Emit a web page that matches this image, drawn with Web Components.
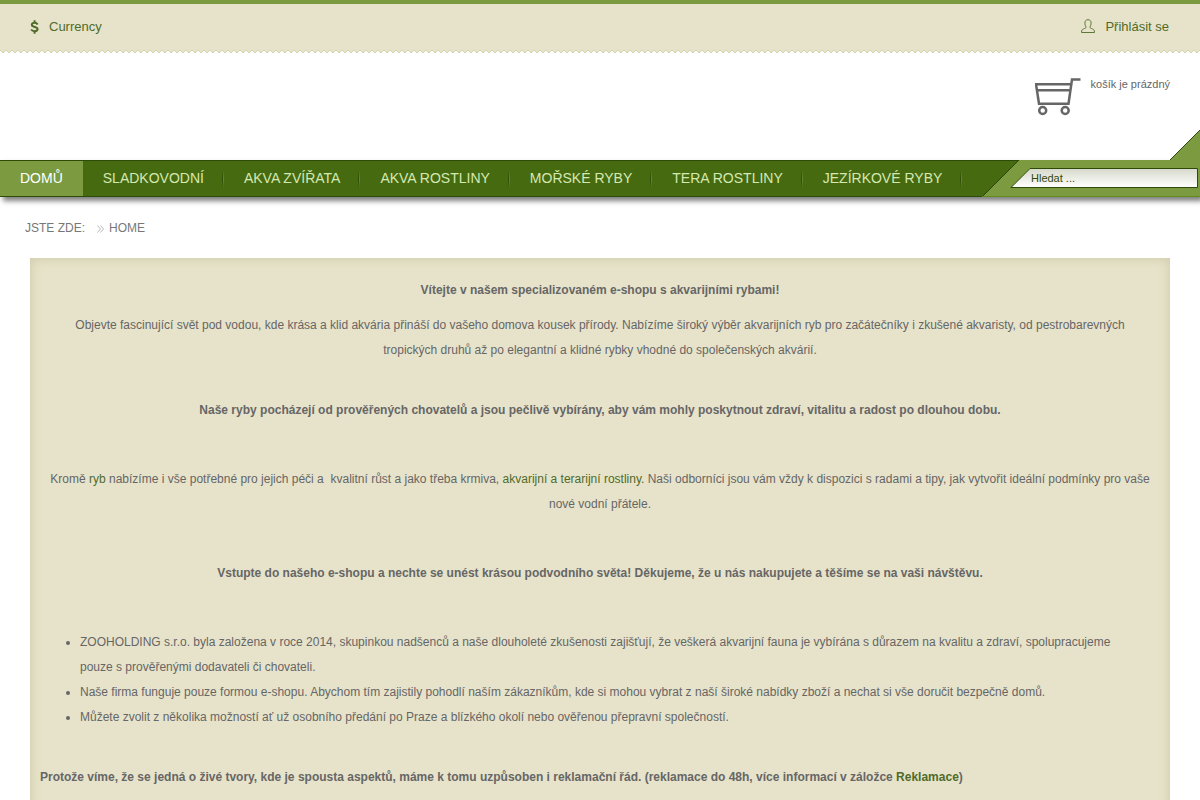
<!DOCTYPE html>
<html lang="cs">
<head>
<meta charset="utf-8">
<title>Akvarijní ryby</title>
<style>
html{overflow-x:hidden;scrollbar-width:none}
body{margin:0;background:#fff;color:#666;font:12px/25px "Liberation Sans",Arial,sans-serif}
a{color:#4f6b29;text-decoration:none}
</style>
</head>
<body>
<shop-page>
  <top-bar></top-bar>
  <shop-cart></shop-cart>
  <main-nav><site-search></site-search></main-nav>
  <bread-crumbs></bread-crumbs>
  <content-panel>
    <text-block>
      <strong>Vítejte v našem specializovaném e-shopu s akvarijními rybami!</strong>
    </text-block>
    <text-block space="small">Objevte fascinující svět pod vodou, kde krása a klid akvária přináší do vašeho domova kousek přírody. Nabízíme široký výběr akvarijních ryb pro začátečníky i zkušené akvaristy, od pestrobarevných tropických druhů až po elegantní a klidné rybky vhodné do společenských akvárií.</text-block>
    <text-block space="medium"><strong>Naše ryby pocházejí od prověřených chovatelů a jsou pečlivě vybírány, aby vám mohly poskytnout zdraví, vitalitu a radost po dlouhou dobu.</strong></text-block>
    <text-block space="large">Kromě <a href="#ryby">ryb</a> nabízíme i vše potřebné pro jejich péči a&nbsp; kvalitní růst a jako třeba krmiva, <a href="#rostliny">akvarijní a terarijní rostliny.</a> Naši odborníci jsou vám vždy k dispozici s radami a tipy, jak vytvořit ideální podmínky pro vaše nové vodní přátele.</text-block>
    <text-block space="large"><strong>Vstupte do našeho e-shopu a nechte se unést krásou podvodního světa! Děkujeme, že u nás nakupujete a těšíme se na vaši návštěvu.</strong></text-block>
    <about-list></about-list>
    <text-block space="medium" align="left"><strong>Protože víme, že se jedná o živé tvory, kde je spousta aspektů, máme k tomu uzpůsoben i reklamační řád. (reklamace do 48h, více informací v záložce <a href="#reklamace">Reklamace</a>)</strong></text-block>
  </content-panel>
</shop-page>
<script>
function define(name, html) {
  const template = document.createElement('template');
  template.innerHTML = html;
  customElements.define(name, class extends HTMLElement {
    constructor() {
      super();
      this.attachShadow({mode: 'open'}).append(template.content.cloneNode(true));
    }
  });
}

define('shop-page', `<style>:host{display:block}</style><slot></slot>`);

define('top-bar', `
<style>
:host{display:block;background:#e7e3ca;border-top:4px solid #7c9b40}
.row{display:flex;justify-content:space-between;align-items:center;height:45px;padding:0 31px 1px 30px}
a,button{display:flex;align-items:center;gap:10px;padding:0;border:0;background:none;color:#4f6b29;font:13px/20px "Liberation Sans",Arial,sans-serif;text-decoration:none}
svg{display:block}
.edge{height:4px;width:100%}
</style>
<div class="row">
  <button type="button"><svg width="9" height="14" viewBox="0 0 9 14" fill="none" stroke="#4f6b29" stroke-width="2"><path d="M7.6 4.400C7 3.300 6 2.700 4.600 2.700 2.900 2.700 1.800 3.500 1.800 4.800c0 2.900 5.800 1.300 5.800 4.300 0 1.300-1.200 2.100-2.900 2.100-1.500 0-2.800-.6-3.600-1.700M4.600.3V3M4.600 11v2.700"/></svg>Currency</button>
  <a href="#login"><svg width="14" height="16" viewBox="0 0 14 16" fill="none" stroke="#5c7836"><path d="M5.2 8.100C4.300 7.200 3.900 5.700 3.900 4.100 3.900 2 5.100.7 7 .7s3.100 1.300 3.100 3.400c0 1.600-.4 3.100-1.300 4 .2 1 1.300 1.300 2.700 1.800 1.300.5 2 1.300 2 3.600H.500c0-2.300.7-3.100 2-3.600 1.400-.5 2.500-.8 2.700-1.800z"/></svg>Přihlásit se</a>
</div>
<svg class="edge" aria-hidden="true"><defs><pattern id="z" width="6" height="4" patternUnits="userSpaceOnUse"><path d="M0 1 3 4 6 1V5H0z" transform="matrix(1 0 0 -1 0 5)" fill="none"/><path d="M0 0 3 3 6 0V5H0z" fill="#fff"/><path d="M0 0 3 3 6 0" fill="none" stroke="#d3d3ae"/></pattern></defs><rect width="100%" height="4" fill="url(#z)"/></svg>`);

define('shop-cart', `
<style>
:host{display:flex;justify-content:flex-end;gap:10px;height:83px;padding:23px 30px 0;font-size:11px;line-height:14px}
svg{display:block}
</style>
<svg width="46" height="39" viewBox="0 0 46 39" fill="none" stroke="#666" stroke-width="2.500"><path d="M45.500 2.500H37L33.500 26.800H4L1 7.300H36M2 13.300H35.500"/><circle cx="7.700" cy="33.500" r="3.500"/><circle cx="30.200" cy="33.500" r="3.500"/></svg>
<span>košík je prázdný</span>`);

define('main-nav', `
<style>
:host{display:flex;justify-content:space-between;position:relative;height:35px;background:#466a10;border-top:1px solid #2e4a08;border-bottom:1px solid #2e4a08;box-shadow:3px 4px 5px rgba(0,0,0,.5)}
nav{display:flex}
a{display:block;padding:0 20px;font-size:14px;line-height:34px;color:#d5e8b0;text-decoration:none;background:linear-gradient(#466a10,#2e4a08,#466a10) right 1px center/1px 18px no-repeat,linear-gradient(#466a10,#668739,#466a10) right center/1px 18px no-repeat;white-space:nowrap}
a.on{background:#7c9b40;color:#fff}
</style>
<nav><a class="on" href="#domu">DOMŮ</a><a href="#sladkovodni">SLADKOVODNÍ</a><a href="#zvirata">AKVA ZVÍŘATA</a><a href="#rostliny">AKVA ROSTLINY</a><a href="#morske">MOŘSKÉ RYBY</a><a href="#tera">TERA ROSTLINY</a><a href="#jezirkove">JEZÍRKOVÉ RYBY</a></nav>
<slot></slot>`);

define('site-search', `
<style>
:host{display:block;position:relative;width:217px;flex:none}
svg{position:absolute;right:0;bottom:-1px;display:block}
label{display:block;position:relative;margin:7px 2px 0 28px}
input{display:block;box-sizing:border-box;width:100%;height:20px;padding:0 4px 0 20px;border:0;background:none;outline:0;color:#2e4a08;font:11px/20px "Liberation Sans",Arial,sans-serif}
input::placeholder{color:#2e4a08;opacity:1}
</style>
<svg width="218" height="68" viewBox="0 0 218 68" aria-hidden="true">
<defs><linearGradient id="f" x2="0" y2="1"><stop stop-color="#d6d9cb"/><stop offset="1" stop-color="#fff"/></linearGradient></defs>
<path d="M0 68 37 31H188L218 1V68z" fill="#7c9b40"/>
<path d="M0 68 37 31M188 31 218 1" stroke="#2e4a08"/>
<path d="M0 67.500H218" stroke="#618c1b"/>
<path d="M29 58.500 48 39.500H215.500V58.500z" fill="url(#f)" stroke="#2e4a08"/>
</svg>
<label><input type="text" aria-label="Hledat" placeholder="Hledat ..."></label>`);

define('bread-crumbs', `
<style>
:host{display:flex;align-items:center;height:25px;padding:19px 25px 17px;color:#777}
svg{margin:0 5px 0 12px}
a{color:inherit;text-decoration:none}
</style>
<span>JSTE ZDE:</span><svg width="7" height="8" viewBox="0 0 7 8" fill="none" stroke="#b8b8b8"><path d="M.5.5 3.500 4 .5 7.500M3.500.5 6.500 4 3.500 7.500"/></svg><a href="#home">HOME</a>`);

define('content-panel', `
<style>
:host{display:block;margin:0 30px;padding:20px 10px 40px;background:#e7e3ca;box-shadow:inset 0 0 12px rgba(160,165,110,.4)}
</style><slot></slot>`);

define('text-block', `
<style>
:host{display:block;padding:0 8px;text-align:center}
:host([align=left]){padding:0;text-align:left}
:host([space=small]){margin-top:10px}
:host([space=medium]){margin-top:35px}
:host([space=large]){margin-top:44px}
p{margin:0}
</style><p><slot></slot></p>`);

define('about-list', `
<style>
:host{display:block;margin-top:44px}
ul{margin:0;padding:0 30px 0 40px}
</style>
<ul>
<li>ZOOHOLDING s.r.o. byla založena v roce 2014, skupinkou nadšenců a naše dlouholeté zkušenosti zajišťují, že veškerá akvarijní fauna je vybírána s důrazem na kvalitu a zdraví, spolupracujeme pouze s prověřenými dodavateli či chovateli.</li>
<li>Naše firma funguje pouze formou e-shopu. Abychom tím zajistily pohodlí naším zákazníkům, kde si mohou vybrat z naší široké nabídky zboží a nechat si vše doručit bezpečně domů.</li>
<li>Můžete zvolit z několika možností ať už osobního předání po Praze a blízkého okolí nebo ověřenou přepravní společností.</li>
</ul>`);
</script>
</body>
</html>
